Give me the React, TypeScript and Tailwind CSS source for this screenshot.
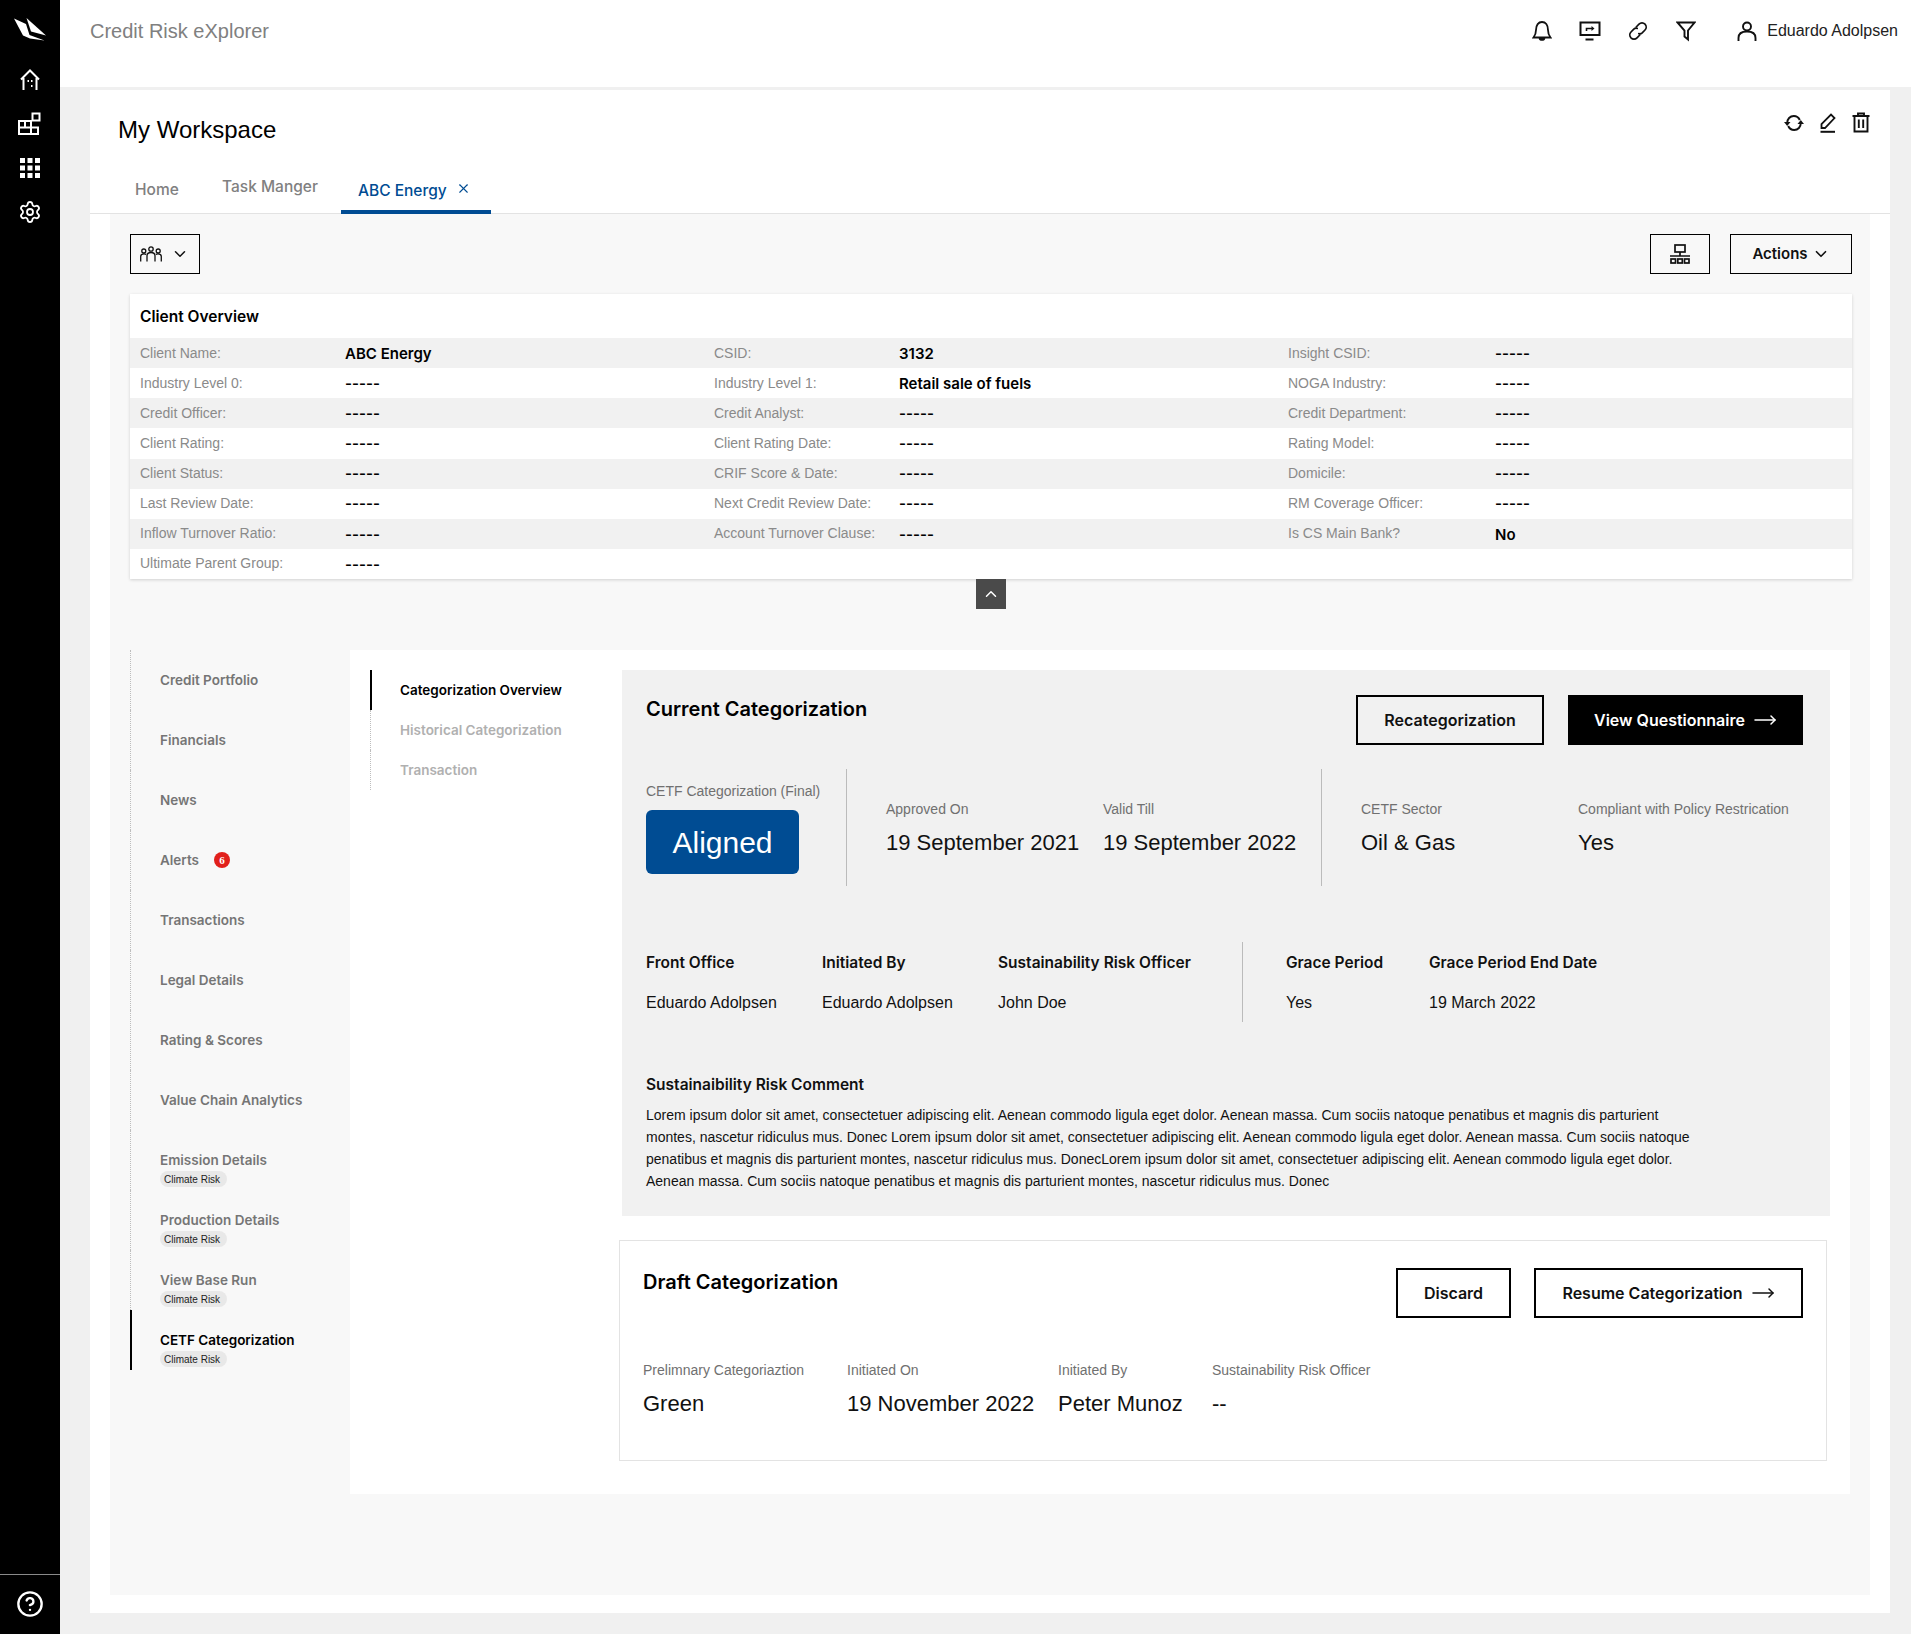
import { ChevronDown, ChevronUp, X, Settings, CircleHelp, MoveRight } from 'lucide-react'

const overviewRows = [
  [['Client Name:', 'ABC Energy'], ['CSID:', '3132'], ['Insight CSID:', '-----']],
  [['Industry Level 0:', '-----'], ['Industry Level 1:', 'Retail sale of fuels'], ['NOGA Industry:', '-----']],
  [['Credit Officer:', '-----'], ['Credit Analyst:', '-----'], ['Credit Department:', '-----']],
  [['Client Rating:', '-----'], ['Client Rating Date:', '-----'], ['Rating Model:', '-----']],
  [['Client Status:', '-----'], ['CRIF Score & Date:', '-----'], ['Domicile:', '-----']],
  [['Last Review Date:', '-----'], ['Next Credit Review Date:', '-----'], ['RM Coverage Officer:', '-----']],
  [['Inflow Turnover Ratio:', '-----'], ['Account Turnover Clause:', '-----'], ['Is CS Main Bank?', 'No']],
  [['Ultimate Parent Group:', '-----']],
]

const navItems = [
  { label: 'Credit Portfolio' },
  { label: 'Financials' },
  { label: 'News' },
  { label: 'Alerts', badge: '6' },
  { label: 'Transactions' },
  { label: 'Legal Details' },
  { label: 'Rating & Scores' },
  { label: 'Value Chain Analytics' },
  { label: 'Emission Details', pill: true },
  { label: 'Production Details', pill: true },
  { label: 'View Base Run', pill: true },
  { label: 'CETF Categorization', pill: true, active: true },
]

function Logo() {
  return (
    <svg width="60" height="58" viewBox="0 0 60 58" fill="white">
      <path d="M14 18.5 L26 24 L29.5 35 L44.5 40.5 L30 38.5 L23 35.5 Z" />
      <path d="M26.5 18 L46 35.5 L31 31.5 Z" />
    </svg>
  )
}

function HomeIcon() {
  return (
    <svg width="24" height="24" viewBox="0 0 24 24" fill="none" stroke="white" strokeWidth="2">
      <path d="M3 11.5 L12 2.5 L21 11.5 M5.5 10 V22 M18.5 10 V22" />
      <path d="M9.5 13h1.5M13 13h1.5M13 18h1.5" strokeWidth="2" />
    </svg>
  )
}

function AppsIcon() {
  return (
    <svg width="24" height="24" viewBox="0 0 24 24" fill="none" stroke="white" strokeWidth="2">
      <rect x="1" y="9" width="12" height="13" />
      <path d="M1 15.5h12M7 9v6.5M13 15.5h7v6.5h-7" />
      <rect x="14.5" y="1.5" width="7" height="7" />
    </svg>
  )
}

function GridIcon() {
  return (
    <svg width="24" height="24" viewBox="0 0 24 24" fill="white">
      <rect x="2" y="2" width="5" height="5" />
      <rect x="9.5" y="2" width="5" height="5" />
      <rect x="17" y="2" width="5" height="5" />
      <rect x="2" y="9.5" width="5" height="5" />
      <rect x="9.5" y="9.5" width="5" height="5" />
      <rect x="17" y="9.5" width="5" height="5" />
      <rect x="2" y="17" width="5" height="5" />
      <rect x="9.5" y="17" width="5" height="5" />
      <rect x="17" y="17" width="5" height="5" />
    </svg>
  )
}

function BellIcon() {
  return (
    <svg width="20" height="22" viewBox="0 0 20 22" fill="none" stroke="#111" strokeWidth="1.8">
      <path d="M1.5 17.5 C3.5 15 4 13 4 10 C4 5 6.5 2 10 2 C13.5 2 16 5 16 10 C16 13 16.5 15 18.5 17.5 Z" />
      <path d="M7.5 18 C8 20.5 12 20.5 12.5 18" fill="#111" />
    </svg>
  )
}

function ScreenIcon() {
  return (
    <svg width="22" height="20" viewBox="0 0 22 20" fill="none" stroke="#111" strokeWidth="2">
      <rect x="1.5" y="1.5" width="19" height="12.5" />
      <path d="M6.5 18.5h8" />
      <path d="M7.5 10 V7.5 H13" strokeWidth="1.6" />
      <path d="M12.5 5 L15.5 7.5 L12.5 10 Z" fill="#111" stroke="none" />
    </svg>
  )
}

function LinkIcon() {
  return (
    <svg width="20" height="20" viewBox="0 0 20 20" fill="none" stroke="#111" strokeWidth="1.7" strokeLinecap="round">
      <path d="M8.2 6 L11 3.2 C12.7 1.5 15.3 1.5 17 3.2 C18.6 4.9 18.6 7.4 17 9 L14.2 11.8 C13.2 12.7 12 13 10.8 12.6" />
      <path d="M11.8 14 L9 16.8 C7.3 18.5 4.7 18.5 3 16.8 C1.4 15.1 1.4 12.6 3 11 L5.8 8.2 C6.8 7.3 8 7 9.2 7.4" />
    </svg>
  )
}

function FilterIcon() {
  return (
    <svg width="20" height="21" viewBox="0 0 20 21" fill="none" stroke="#111" strokeWidth="1.9">
      <path d="M1.5 1.5 H18.5 L12 9.5 V18.5 L8.5 15.5 V9.5 Z" />
    </svg>
  )
}

function UserIcon() {
  return (
    <svg width="20" height="21" viewBox="0 0 20 21" fill="none" stroke="#111" strokeWidth="1.9">
      <circle cx="10" cy="5.5" r="4" />
      <path d="M1.5 20 V17 C1.5 12.5 5 10.5 10 10.5 C15 10.5 18.5 12.5 18.5 17 V20" />
    </svg>
  )
}

function SyncIcon() {
  return (
    <svg width="20" height="18" viewBox="0 0 20 18" fill="none" stroke="#111" strokeWidth="1.9">
      <path d="M3.2 9 C3.2 5 6 2 9.8 2 C12.5 2 14.6 3.4 15.8 6" />
      <path d="M16.8 9 C16.8 13 14 16 10.2 16 C7.5 16 5.4 14.6 4.2 12" />
      <path d="M0 8 H6.5 L3.2 12 Z" fill="#111" stroke="none" />
      <path d="M20 10 H13.5 L16.8 6 Z" fill="#111" stroke="none" />
    </svg>
  )
}

function PenIcon() {
  return (
    <svg width="16" height="20" viewBox="0 0 16 20" fill="none" stroke="#111" strokeWidth="1.8">
      <path d="M1.5 15 V11 L11 1.5 L14.5 5 L5 15 Z" />
      <path d="M0.5 18.8 H15" strokeWidth="2" />
    </svg>
  )
}

function TrashIcon() {
  return (
    <svg width="18" height="21" viewBox="0 0 18 21" fill="none" stroke="#111" strokeWidth="1.9">
      <path d="M0.5 4 H17.5 M6 4 V1.5 H12 V4" />
      <path d="M2.5 4 V19.5 H15.5 V4" />
      <path d="M6.8 7.5 V16 M11.2 7.5 V16" />
    </svg>
  )
}

function PeopleIcon() {
  return (
    <svg width="22" height="16" viewBox="0 0 22 16" fill="none" stroke="#111" strokeWidth="1.3">
      <circle cx="11" cy="3" r="2.2" />
      <circle cx="3.8" cy="5" r="2" />
      <circle cx="18.2" cy="5" r="2" />
      <path d="M7 15.5 V10 C7 7.8 8.8 6.5 11 6.5 C13.2 6.5 15 7.8 15 10 V15.5" />
      <path d="M0.7 15.5 V10.5 C0.7 8.8 2.2 7.8 4 7.8 C4.8 7.8 5.6 8 6.2 8.4" />
      <path d="M21.3 15.5 V10.5 C21.3 8.8 19.8 7.8 18 7.8 C17.2 7.8 16.4 8 15.8 8.4" />
    </svg>
  )
}

function NetworkIcon() {
  return (
    <svg width="20" height="20" viewBox="0 0 20 20" fill="none" stroke="#111" strokeWidth="1.7">
      <rect x="5" y="1" width="10" height="7" />
      <path d="M10 8 V12 M0 12 H20" />
      <rect x="1" y="15" width="4.5" height="4" />
      <rect x="7.8" y="15" width="4.5" height="4" />
      <rect x="14.5" y="15" width="4.5" height="4" />
    </svg>
  )
}

function Stat({ label, value, className }: { label: string; value: string; className: string }) {
  return (
    <div className={className}>
      <div className="h-5 text-[14px] leading-5 text-[#707070]">{label}</div>
      <div className="mt-[10px] h-7 text-[22px] leading-7 text-[#111]">{value}</div>
    </div>
  )
}

function Person({ label, value, className }: { label: string; value: string; className: string }) {
  return (
    <div className={className}>
      <div className="h-5 font-['Inter',sans-serif] text-[15.5px] font-semibold leading-5 text-[#111] whitespace-nowrap">{label}</div>
      <div className="mt-5 h-5 text-[16px] leading-5 text-[#111]">{value}</div>
    </div>
  )
}

export default function App() {
  return (
    <div className="flex min-h-[1634px] w-full bg-white font-['Liberation_Sans',sans-serif]">
      {/* Sidebar */}
      <aside className="flex w-[60px] flex-shrink-0 flex-col items-center bg-black">
        <Logo />
        <div className="flex flex-col gap-5 pt-[10px]">
          <HomeIcon />
          <AppsIcon />
          <GridIcon />
          <Settings size={24} color="white" strokeWidth={1.8} />
        </div>
        <div className="mt-auto flex h-[60px] w-full items-center justify-center border-t border-[#8a8a8a] pb-[2px]">
          <CircleHelp size={28} color="white" strokeWidth={2} />
        </div>
      </aside>

      <div className="flex flex-1 flex-col">
        {/* Header */}
        <header className="flex h-[87px] flex-shrink-0 items-start justify-between bg-white pl-[30px] pr-[22px] pt-[17px]">
          <div className="text-[20px] leading-7 text-[#808080]">Credit Risk eXplorer</div>
          <div className="flex items-center pt-[2px]">
            <div className="flex w-[48px] justify-center"><BellIcon /></div>
            <div className="flex w-[48px] justify-center"><ScreenIcon /></div>
            <div className="flex w-[48px] justify-center"><LinkIcon /></div>
            <div className="flex w-[48px] justify-center"><FilterIcon /></div>
            <div className="ml-[27px] mr-[10px]"><UserIcon /></div>
            <div className="text-[16px] text-[#222]">Eduardo Adolpsen</div>
          </div>
        </header>

        <div className="w-[1851px] flex-1 bg-[#f0f0f0] pl-[30px] pr-[21px] pt-[3px] pb-[21px]">
          <div className="bg-white pb-[18px]">
            {/* Workspace title */}
            <div className="flex h-[80px] items-start justify-between pl-[28px] pr-[20px]">
              <div className="pt-[22px] text-[24px] leading-9 text-black">My Workspace</div>
              <div className="flex items-center gap-[16px] pt-[22px]">
                <SyncIcon />
                <PenIcon />
                <TrashIcon />
              </div>
            </div>

            {/* Tabs */}
            <div className="flex h-[44px] items-end border-b border-[#e3e3e3] pl-[45px] font-['Inter',sans-serif] text-[15.5px] font-medium">
              <div className="h-[35px] w-[87px] text-[#808080]">Home</div>
              <div className="h-[38px] w-[119px] text-[#808080]">Task Manger</div>
              <div className="flex h-[35px] w-[150px] -mb-px items-start gap-[9px] border-b-[4px] border-[#004c93] pl-[17px] text-[#004c93]">
                <span>ABC Energy</span>
                <X size={15} className="mt-[2px]" strokeWidth={1.8} />
              </div>
            </div>

            <div className="mx-[20px] bg-[#f8f8f8] pb-[101px] pl-[20px] pr-[18px] pt-[20px]">
              {/* Toolbar */}
              <div className="flex h-[40px] justify-between">
                <div className="flex w-[70px] items-center gap-[9px] border border-black pl-[9px]">
                  <PeopleIcon />
                  <ChevronDown size={18} strokeWidth={2} color="#111" />
                </div>
                <div className="flex gap-[20px]">
                  <div className="flex w-[60px] items-center justify-center border border-black"><NetworkIcon /></div>
                  <div className="flex w-[122px] items-center justify-center gap-[4px] border border-black font-['Inter',sans-serif] text-[15px] font-semibold text-[#111]">
                    Actions
                    <ChevronDown size={18} strokeWidth={2.2} />
                  </div>
                </div>
              </div>

              {/* Client overview */}
              <div className="mt-[20px] h-[285px] bg-white shadow-[0_1px_3px_rgba(0,0,0,0.16)]">
                <div className="h-[44px] pl-[10px] pt-[13px] font-['Inter',sans-serif] text-[15.5px] font-semibold leading-5 text-black">Client Overview</div>
                {overviewRows.map((row, i) => (
                  <div key={i} className={`flex h-[30.125px] items-center pl-[10px] ${i % 2 === 0 ? 'bg-[#f1f1f1]' : ''}`}>
                    {row.map(([label, value], j) => (
                      <div key={j} className={`flex items-center ${j === 0 ? 'w-[574px]' : j === 1 ? 'w-[574px]' : ''}`}>
                        <span className={`whitespace-nowrap text-[14px] text-[#8a8a8a] ${j === 0 ? 'w-[205px]' : j === 1 ? 'w-[185px]' : 'w-[207px]'}`}>{label}</span>
                        <span className="mt-[2px] font-['Inter',sans-serif] text-[15px] font-semibold text-black">{value}</span>
                      </div>
                    ))}
                  </div>
                ))}
              </div>

              <div className="mx-auto flex h-[30px] w-[30px] items-center justify-center bg-[#4a4a4a]">
                <ChevronUp size={18} color="white" strokeWidth={2} />
              </div>

              {/* Lower section */}
              <div className="mt-[41px] mr-[2px] flex h-[844px]">
                <nav className="w-[220px] flex-shrink-0 font-['Inter',sans-serif]">
                  {navItems.map((item) => (
                    <div
                      key={item.label}
                      className={`h-[60px] pt-[20px] ${item.active ? 'border-l-2 border-black pl-[28px]' : 'border-l border-dotted border-[#bdbdbd] pl-[29px]'}`}
                    >
                      <div className={`flex items-center text-[13.5px] font-semibold leading-5 ${item.active ? 'text-black' : 'text-[#757575]'}`}>
                        {item.label}
                        {item.badge && (
                          <span className="ml-[15px] flex h-4 w-4 items-center justify-center rounded-full bg-[#e1201c] font-['Liberation_Serif',serif] text-[11px] font-bold text-white">{item.badge}</span>
                        )}
                      </div>
                      {item.pill && (
                        <div className="mt-px flex h-4 w-[67px] items-center rounded-full bg-[#e8e8e8] pl-[4px] font-['Liberation_Sans',sans-serif] text-[10px] text-[#222]">Climate Risk</div>
                      )}
                    </div>
                  ))}
                </nav>

                <div className="flex flex-1 bg-white">
                  {/* Sub navigation */}
                  <div className="w-[269px] flex-shrink-0 pl-[20px] pt-[20px] font-['Inter',sans-serif] text-[13.5px] font-semibold">
                    <div className="flex h-[40px] items-center border-l-2 border-black pl-[28px] text-black">Categorization Overview</div>
                    <div className="flex h-[40px] items-center border-l border-dotted border-[#bdbdbd] pl-[29px] text-[#b0b0b0]">Historical Categorization</div>
                    <div className="flex h-[40px] items-center border-l border-dotted border-[#bdbdbd] pl-[29px] text-[#b0b0b0]">Transaction</div>
                  </div>

                  <div className="pt-[20px]">
                    {/* Current categorization */}
                    <section className="ml-[3px] w-[1208px] bg-[#f1f1f1] pb-[24px] pl-[24px] pr-[27px] pt-[25px]">
                      <div className="flex justify-between">
                        <h2 className="font-['Inter',sans-serif] text-[20px] font-semibold leading-7 text-black">Current Categorization</h2>
                        <div className="flex gap-[24px] font-['Inter',sans-serif] text-[16px] font-semibold">
                          <div className="flex h-[50px] w-[188px] items-center justify-center border-2 border-black text-[#111]">Recategorization</div>
                          <div className="flex h-[50px] w-[235px] items-center justify-center gap-[8px] bg-black text-white">
                            View Questionnaire
                            <MoveRight size={24} strokeWidth={1.5} />
                          </div>
                        </div>
                      </div>

                      <div className="mt-[24px] flex h-[117px]">
                        <div className="w-[216px] border-r border-[#bbbbbb] pt-[14px]">
                          <div className="h-4 text-[14px] leading-4 text-[#707070]">CETF Categorization (Final)</div>
                          <div className="mt-[11px] flex h-[64px] w-[153px] items-center justify-center rounded-[6px] bg-[#004c93] text-[30px] text-white">Aligned</div>
                        </div>
                        <div className="flex w-[475px] border-r border-[#bbbbbb] pl-[39px] pt-[30px]">
                          <Stat label="Approved On" value="19 September 2021" className="w-[217px]" />
                          <Stat label="Valid Till" value="19 September 2022" className="w-[218px]" />
                        </div>
                        <div className="flex pl-[39px] pt-[30px]">
                          <Stat label="CETF Sector" value="Oil & Gas" className="w-[217px]" />
                          <Stat label="Compliant with Policy Restrication" value="Yes" className="w-[225px] whitespace-nowrap" />
                        </div>
                      </div>

                      <div className="mt-[56px] flex h-[80px]">
                        <div className="flex w-[597px] border-r border-[#bbbbbb] pt-[11px]">
                          <Person label="Front Office" value="Eduardo Adolpsen" className="w-[176px]" />
                          <Person label="Initiated By" value="Eduardo Adolpsen" className="w-[176px]" />
                          <Person label="Sustainability Risk Officer" value="John Doe" className="w-[244px]" />
                        </div>
                        <div className="flex pl-[43px] pt-[11px]">
                          <Person label="Grace Period" value="Yes" className="w-[143px]" />
                          <Person label="Grace Period End Date" value="19 March 2022" className="w-[220px]" />
                        </div>
                      </div>

                      <div className="mt-[53px] h-5 font-['Inter',sans-serif] text-[15.5px] font-semibold leading-5 text-[#111]">Sustainaibility Risk Comment</div>
                      <p className="mt-[9px] whitespace-nowrap text-[14px] leading-[22px] text-[#111]">
                        Lorem ipsum dolor sit amet, consectetuer adipiscing elit. Aenean commodo ligula eget dolor. Aenean massa. Cum sociis natoque penatibus et magnis dis parturient<br />
                        montes, nascetur ridiculus mus. Donec Lorem ipsum dolor sit amet, consectetuer adipiscing elit. Aenean commodo ligula eget dolor. Aenean massa. Cum sociis natoque<br />
                        penatibus et magnis dis parturient montes, nascetur ridiculus mus. DonecLorem ipsum dolor sit amet, consectetuer adipiscing elit. Aenean commodo ligula eget dolor.<br />
                        Aenean massa. Cum sociis natoque penatibus et magnis dis parturient montes, nascetur ridiculus mus. Donec
                      </p>
                    </section>

                    {/* Draft categorization */}
                    <section className="mt-[24px] h-[221px] w-[1208px] border border-[#e3e3e3] bg-white pl-[23px] pr-[23px] pt-[27px]">
                      <div className="flex justify-between">
                        <h2 className="font-['Inter',sans-serif] text-[20px] font-semibold leading-7 text-black">Draft Categorization</h2>
                        <div className="flex gap-[23px] font-['Inter',sans-serif] text-[16px] font-semibold text-[#111]">
                          <div className="flex h-[50px] w-[115px] items-center justify-center border-2 border-black">Discard</div>
                          <div className="flex h-[50px] w-[269px] items-center justify-center gap-[8px] border-2 border-black">
                            Resume Categorization
                            <MoveRight size={24} strokeWidth={1.5} />
                          </div>
                        </div>
                      </div>
                      <div className="mt-[42px] flex">
                        <Stat label="Prelimnary Categoriaztion" value="Green" className="w-[204px]" />
                        <Stat label="Initiated On" value="19 November 2022" className="w-[211px]" />
                        <Stat label="Initiated By" value="Peter Munoz" className="w-[154px]" />
                        <Stat label="Sustainability Risk Officer" value="--" className="w-[200px]" />
                      </div>
                    </section>
                  </div>
                </div>
              </div>
            </div>
          </div>
        </div>
      </div>
    </div>
  )
}
